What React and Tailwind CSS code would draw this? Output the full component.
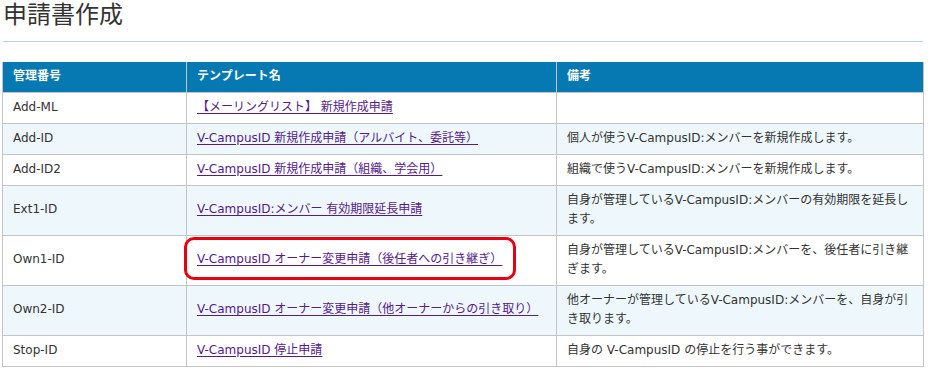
const rows = [
  { id: 'Add-ML', name: '【メーリングリスト】 新規作成申請', note: '' },
  { id: 'Add-ID', name: 'V-CampusID 新規作成申請（アルバイト、委託等）', note: '個人が使うV-CampusID:メンバーを新規作成します。' },
  { id: 'Add-ID2', name: 'V-CampusID 新規作成申請（組織、学会用）', note: '組織で使うV-CampusID:メンバーを新規作成します。' },
  { id: 'Ext1-ID', name: 'V-CampusID:メンバー 有効期限延長申請', note: '自身が管理しているV-CampusID:メンバーの有効期限を延長します。' },
  { id: 'Own1-ID', name: 'V-CampusID オーナー変更申請（後任者への引き継ぎ）', note: '自身が管理しているV-CampusID:メンバーを、後任者に引き継ぎます。', mark: true },
  { id: 'Own2-ID', name: 'V-CampusID オーナー変更申請（他オーナーからの引き取り）', note: '他オーナーが管理しているV-CampusID:メンバーを、自身が引き取ります。' },
  { id: 'Stop-ID', name: 'V-CampusID 停止申請', note: '自身の V-CampusID の停止を行う事ができます。' },
];

const cell = 'border border-[#c4c4c4] px-[10px] py-[5px] align-middle';

export default function App() {
  return (
    <div
      className="h-[368px] w-[933px] overflow-hidden bg-white pl-[3px] pr-[10px] text-[12px] leading-[19.5px] text-[#333]"
      style={{ fontFamily: '"DejaVu Sans", "Noto Sans CJK JP", sans-serif' }}
    >
      <h1 className="pt-[1px] text-[24px] leading-[28px] font-normal text-[#333]">申請書作成</h1>
      <hr className="mt-[12px] border-0 border-t border-[#b5d3dc]" />

      <table className="mt-[20px] w-[921px] -ml-[1px] table-fixed border-collapse">
        <colgroup>
          <col className="w-[184px]" />
          <col className="w-[370px]" />
          <col className="w-[367px]" />
        </colgroup>
        <thead>
          <tr className="h-[30px] bg-[#0779b2] text-left text-white">
            <th className="border-x border-[#c4c4c4] px-[10px] font-bold">管理番号</th>
            <th className="border-x border-[#c4c4c4] px-[10px] font-bold">テンプレート名</th>
            <th className="border-x border-[#c4c4c4] px-[10px] font-bold">備考</th>
          </tr>
        </thead>
        <tbody>
          {rows.map(function (r, i) {
            return (
              <tr key={r.id} className={i % 2 === 1 ? 'h-[31px] bg-[#eef8fc]' : 'h-[31px] bg-white'}>
                <td className={cell}>{r.id}</td>
                <td className={cell}>
                  <span className="relative inline-block">
                    <a href="#" className="text-[#551a8b] underline underline-offset-[2px]">{r.name}</a>
                    {r.mark && (
                      <span className="pointer-events-none absolute -top-[13px] -bottom-[10px] -left-[13px] -right-[14px] rounded-[10px] border-[3px] border-[#e60012]" />
                    )}
                  </span>
                </td>
                <td className={cell}>{r.note}</td>
              </tr>
            );
          })}
        </tbody>
      </table>
    </div>
  );
}
